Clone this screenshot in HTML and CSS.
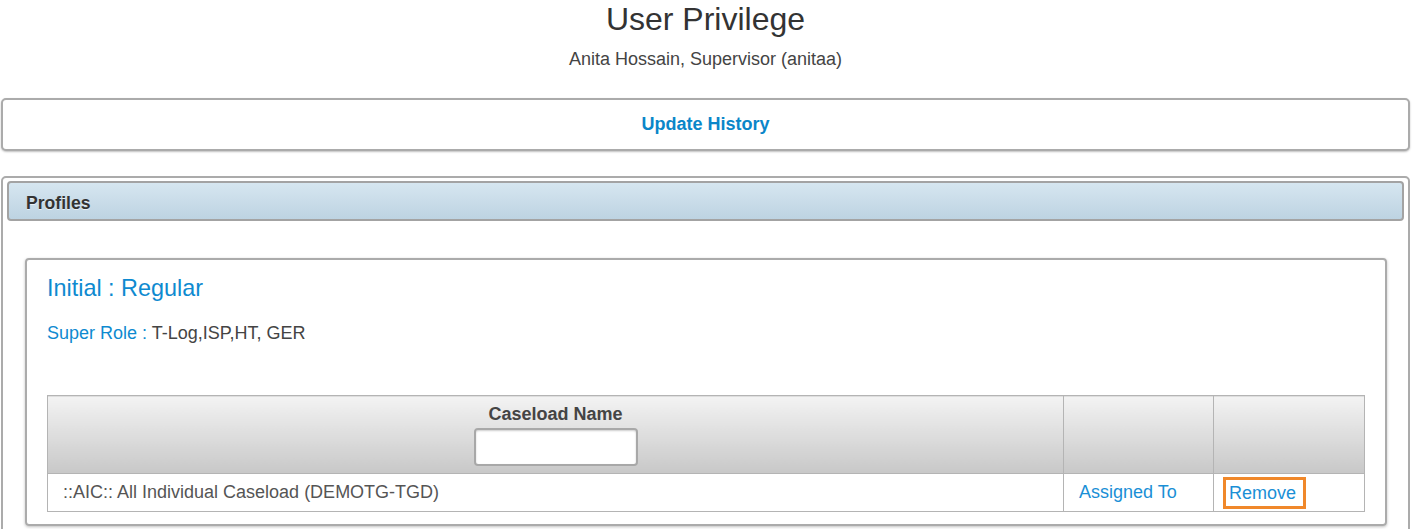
FILE: index.html
```html
<!DOCTYPE html>
<html>
<head>
<meta charset="utf-8">
<link rel="stylesheet" href="styles.css">
</head>
<body>
<div class="page">
  <h1 class="title">User Privilege</h1>
  <div class="subtitle">Anita Hossain, Supervisor (anitaa)</div>

  <div class="box history">
    <a class="history-link" href="#">Update History</a>
  </div>

  <div class="box profiles">
    <div class="profiles-head">Profiles</div>
    <div class="card">
      <div class="card-title">Initial : Regular</div>
      <div class="super-role"><span class="label">Super Role :</span> T-Log,ISP,HT, GER</div>
      <table class="grid">
        <colgroup>
          <col>
          <col class="w2">
          <col class="w3">
        </colgroup>
        <thead>
          <tr>
            <th class="c1">
              <div class="th-label">Caseload Name</div>
              <input class="filter" type="text">
            </th>
            <th class="c2"></th>
            <th class="c3"></th>
          </tr>
        </thead>
        <tbody>
          <tr>
            <td class="c1">::AIC:: All Individual Caseload (DEMOTG-TGD)</td>
            <td class="c2"><a class="link" href="#">Assigned To</a></td>
            <td class="c3"><a class="link remove" href="#">Remove</a></td>
          </tr>
        </tbody>
      </table>
    </div>
  </div>
</div>
</body>
</html>
```

FILE: styles.css
```css
html, body {
  margin: 0;
  padding: 0;
  background: #fff;
}
body {
  font-family: "Liberation Sans", Arial, sans-serif;
  font-size: 18px;
  color: #444;
}
.page {
  padding: 0 3px 0 1px;
}
.title {
  margin: 0;
  padding-top: 1px;
  font-size: 32px;
  font-weight: normal;
  line-height: 37px;
  text-align: center;
  color: #333;
}
.subtitle {
  margin-top: 10px;
  text-align: center;
  color: #444;
  line-height: 22px;
}
.box {
  border: 2px solid #ababab;
  border-radius: 5px;
  background: #fff;
  box-shadow: 0 1px 2px rgba(0,0,0,0.25);
}
.history {
  margin-top: 28px;
  height: 49px;
  display: flex;
  align-items: center;
  justify-content: center;
}
.history-link {
  color: #0a86c9;
  font-weight: bold;
  text-decoration: none;
}
.profiles {
  margin-top: 25px;
  padding: 3px 4px 0 4px;
  height: 360px;
  box-shadow: none;
}
.profiles-head {
  border: 2px solid #a3a3a3;
  border-radius: 4px;
  background: linear-gradient(#d6e6f0, #bdd3e2);
  font-weight: bold;
  font-size: 17.6px;
  color: #333;
  text-shadow: 0 1px 0 rgba(255,255,255,0.6);
  padding-left: 17px;
  padding-top: 5px;
  box-sizing: border-box;
  height: 40px;
  display: flex;
  align-items: center;
}
.card {
  margin: 37px 17px 0 18px;
  border: 2px solid #ababab;
  border-radius: 4px;
  box-shadow: 0 1px 3px rgba(0,0,0,0.25);
  padding: 13px 20px 12px 20px;
}
.card-title {
  font-size: 23.4px;
  color: #0e8ad0;
  line-height: 30px;
}
.super-role {
  margin-top: 19px;
  line-height: 22px;
}
.super-role .label {
  color: #0e8ad0;
}
.grid {
  margin-top: 51px;
  width: 100%;
  border-collapse: collapse;
  table-layout: fixed;
}
.grid col.w2 {
  width: 150px;
}
.grid col.w3 {
  width: 151px;
}
.grid th, .grid td {
  border: 1px solid #b4b4b4;
  padding: 0;
}
.grid th {
  height: 77px;
  background: linear-gradient(#f3f3f3, #c8c8c8);
  vertical-align: top;
  text-align: center;
  font-weight: bold;
  color: #444;
}
.th-label {
  margin-top: 8px;
  line-height: 20px;
}
.filter {
  margin-top: 4px;
  width: 164px;
  height: 38px;
  box-sizing: border-box;
  border: 2px solid #a8a8a8;
  border-radius: 4px;
  background: #fff;
  box-shadow: inset 0 1px 2px rgba(0,0,0,0.2);
  outline: none;
  display: inline-block;
  vertical-align: top;
}
.grid td {
  height: 37px;
  vertical-align: middle;
  color: #555;
}
.grid td.c1 {
  padding-left: 15px;
}
.grid td.c2 {
  padding-left: 15px;
}
.grid td.c3 {
  padding-left: 9px;
}
.link {
  color: #1a8fd6;
  text-decoration: none;
}
.remove {
  display: inline-block;
  border: 3px solid #f0882a;
  padding: 3px 7px 2px 3px;
  line-height: 21px;
}
```
